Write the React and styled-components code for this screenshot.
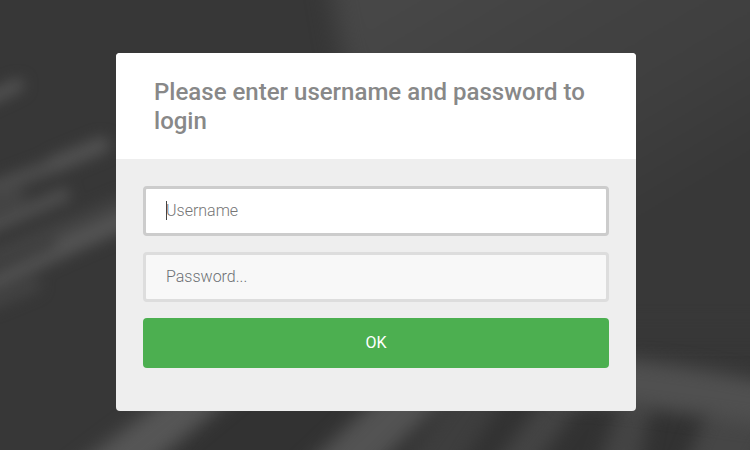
import React from "react";
import styled, { createGlobalStyle } from "styled-components";

const GlobalStyle = createGlobalStyle`
    * {
        box-sizing: border-box;
    }

    body {
        margin: 0;
        overflow: hidden;
        background: #373737;
        font-family: Roboto, "Liberation Sans", sans-serif;
    }
`;

// x1, y1, x2, y2, width, color of every blurred streak
const streaks = [
    [-20, 103, 18, 85, 12, "#545454"],
    [-20, 193, 55, 165, 14, "#4e4e4e"],
    [55, 164, 102, 145, 16, "#525252"],
    [-20, 212, 18, 196, 14, "#464646"],
    [-20, 231, 64, 195, 13, "#505050"],
    [-10, 260, 125, 203, 18, "#424242"],
    [-10, 284, 75, 245, 14, "#535353"],
    [65, 246, 150, 209, 20, "#535353"],
    [-10, 303, 34, 285, 14, "#434343"],
];

const Backdrop = () => {
    return (
        <BackdropSvg viewBox="0 0 750 450" preserveAspectRatio="xMidYMid slice" aria-hidden="true">
            <defs>
                <linearGradient id="topLight" gradientUnits="userSpaceOnUse" x1="400" y1="0" x2="560" y2="270">
                    <stop offset="0" stopColor="#474747" />
                    <stop offset="0.35" stopColor="#424242" />
                    <stop offset="0.65" stopColor="#3f3f3f" />
                    <stop offset="1" stopColor="#383838" />
                </linearGradient>
                <filter id="soft" x="-20%" y="-20%" width="140%" height="140%" colorInterpolationFilters="sRGB">
                    <feGaussianBlur stdDeviation="7" />
                </filter>
                <filter id="beam" x="-20%" y="-20%" width="140%" height="140%" colorInterpolationFilters="sRGB">
                    <feGaussianBlur stdDeviation="9" />
                </filter>
                <filter id="softer" x="-20%" y="-20%" width="140%" height="140%" colorInterpolationFilters="sRGB">
                    <feGaussianBlur stdDeviation="12" />
                </filter>
            </defs>

            <rect width="750" height="450" fill="#373737" />
            <path d="M322 -60 L820 -60 L820 330 L420 330 L343 60 Z" fill="url(#topLight)" filter="url(#softer)" />

            <g filter="url(#soft)" strokeLinecap="round">
                {streaks.map(([x1, y1, x2, y2, width, color], index) => (
                    <line key={index} x1={x1} y1={y1} x2={x2} y2={y2} stroke={color} strokeWidth={width} />
                ))}
            </g>

            <path d="M215 380 L800 380 L800 500 L120 500 Z" fill="#323232" filter="url(#softer)" />
            <g filter="url(#beam)">
                <path d="M44 490 L172 394 L242 390 L120 490 Z" fill="#565656" />
                <path d="M280 490 L386 390 L453 390 L352 490 Z" fill="#535353" />
                <path d="M385 490 L458 390 L510 390 L445 490 Z" fill="#3e3e3e" />
                <path d="M475 490 L550 390 L590 390 L518 490 Z" fill="#444444" />
                <path d="M588 490 L622 400 L652 400 L635 490 Z" fill="#444444" />
                <path d="M675 490 L712 400 L790 400 L740 490 Z" fill="#464646" />
            </g>
            <path
                d="M560 355 L635 360 Q700 367 790 386 L790 428 Q700 415 620 405 L560 402 Z"
                fill="#505050"
                filter="url(#beam)"
            />
        </BackdropSvg>
    );
};

export default function App() {
    return (
        <Page>
            <GlobalStyle />
            <Backdrop />
            <LoginCard>
                <CardHeader>
                    <Title>Please enter username and password to login</Title>
                </CardHeader>
                <LoginForm onSubmit={(e) => e.preventDefault()}>
                    <Field>
                        <Input $active type="text" placeholder="Username" aria-label="Username" />
                        <Caret />
                    </Field>
                    <Field>
                        <Input type="password" placeholder="Password..." aria-label="Password" />
                    </Field>
                    <SubmitButton type="submit">OK</SubmitButton>
                </LoginForm>
            </LoginCard>
        </Page>
    );
}

const Page = styled.main`
    position: relative;
    display: flex;
    justify-content: center;
    align-items: flex-start;
    height: 100vh;
    padding: 53px 0 0 2px;
`;

const BackdropSvg = styled.svg`
    position: absolute;
    top: 0;
    left: 0;
    width: 100%;
    height: 100%;
`;

const LoginCard = styled.section`
    position: relative;
    width: 520px;
    height: 358px;
    border-radius: 4px;
    overflow: hidden;
    background: #eeeeee;
`;

const CardHeader = styled.header`
    height: 106px;
    padding: 25px 38px 23px;
    background: #ffffff;
`;

const Title = styled.h1`
    margin: 0;
    color: #888888;
    font-size: 24px;
    font-weight: 500;
    line-height: 29px;
    letter-spacing: 0.01px;
`;

const LoginForm = styled.form`
    display: flex;
    flex-direction: column;
    gap: 16px;
    padding: 27px;
`;

const Field = styled.div`
    position: relative;
    height: 50px;
`;

const Input = styled.input`
    display: block;
    width: 100%;
    height: 100%;
    padding: 0 20px 2px;
    border: 3px solid ${({ $active }) => ($active ? "#cccccc" : "#dddddd")};
    border-radius: 4px;
    outline: none;
    background: ${({ $active }) => ($active ? "#ffffff" : "#f8f8f8")};
    color: #444444;
    caret-color: transparent;
    font-family: inherit;
    font-size: 16px;
    font-weight: 300;

    &::placeholder {
        color: ${({ $active }) => ($active ? "#757575" : "#6c7074")};
        opacity: 1;
    }
`;

const Caret = styled.span`
    position: absolute;
    top: 15px;
    left: 23px;
    width: 1px;
    height: 19px;
    background: #444444;
`;

const SubmitButton = styled.button`
    height: 50px;
    padding: 0 0 2px;
    border: none;
    border-radius: 4px;
    background: #4caf50;
    color: #ffffff;
    font-family: inherit;
    font-size: 16px;
    font-weight: 400;
    cursor: pointer;
`;
